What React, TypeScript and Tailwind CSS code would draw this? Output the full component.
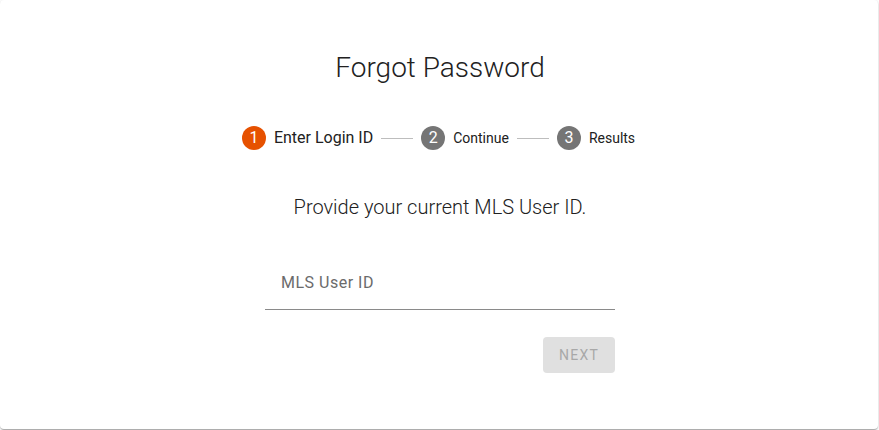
export default function App() {
  const steps = [
    { n: 1, label: "Enter Login ID", active: true },
    { n: 2, label: "Continue", active: false },
    { n: 3, label: "Results", active: false },
  ];

  return (
    <div className="h-[430px] w-[879px] bg-white font-['Roboto',sans-serif]">
      <div className="flex h-[429px] w-[878px] flex-col items-center rounded-[4px] bg-white pl-[2px] shadow-[0_1px_3px_rgba(0,0,0,0.2),0_1px_1px_rgba(0,0,0,0.14),0_2px_1px_-1px_rgba(0,0,0,0.12)]">
        <h1 className="mt-[51px] text-[28px] leading-[34px] font-light text-[#212121]">Forgot Password</h1>

        <div className="mt-[34px] mr-[3px] flex h-[38px] items-center">
          {steps.map((s, i) => (
            <div key={s.n} className="flex items-center">
              {i > 0 && <div className="mx-[8px] h-px w-[32px] bg-[#bdbdbd]" />}
              <div
                className={
                  "flex h-[24px] w-[24px] items-center justify-center rounded-full text-[16px] text-white " +
                  (s.active ? "bg-[#e65100]" : "bg-[#757575]")
                }
              >
                {s.n}
              </div>
              <span
                className={
                  "ml-[8px] text-[#212121] " + (s.active ? "text-[16px]" : "text-[14px]")
                }
              >
                {s.label}
              </span>
            </div>
          ))}
        </div>

        <p className="mt-[38px] text-[20px] leading-[24px] font-light text-[#212121]">
          Provide your current MLS User ID.
        </p>

        <div className="mt-[37px] w-[350px]">
          <input
            placeholder="MLS User ID"
            className="h-[54px] w-full border-b border-[#8a8a8a] px-[16px] text-[16px] tracking-[0.5px] text-[#212121] outline-none placeholder:text-[#6b6b6b]"
          />
        </div>

        <div className="mt-[27px] flex w-[350px] justify-end">
          <button
            disabled
            className="h-[36px] w-[72px] rounded-[4px] bg-[#e0e0e0] text-[14px] font-normal tracking-[1.25px] text-[#a8a8a8]"
          >
            NEXT
          </button>
        </div>
      </div>
    </div>
  );
}
